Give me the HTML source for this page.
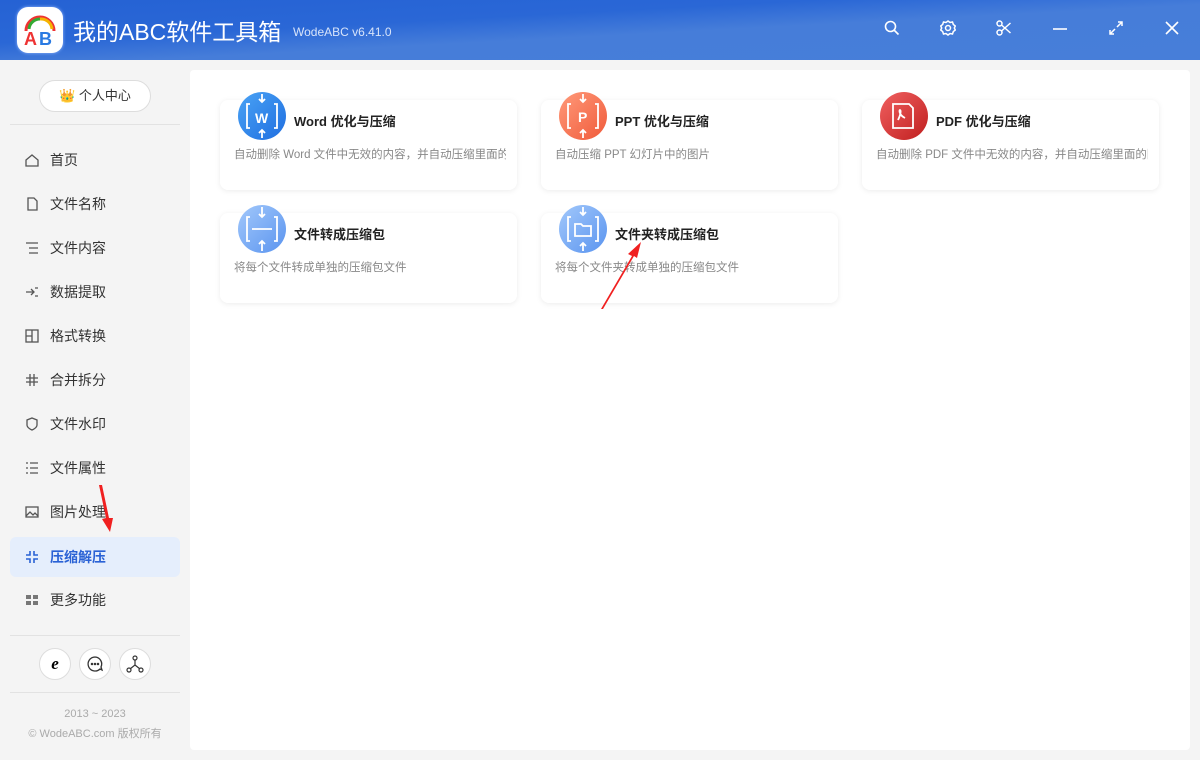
<!DOCTYPE html><html><head><meta charset="utf-8"><style>
*{margin:0;padding:0;box-sizing:border-box}
body{width:1200px;height:760px;overflow:hidden;font-family:"Liberation Sans","Noto Sans CJK SC",sans-serif;background:#f4f4f4;position:relative}
.hdr{position:absolute;left:0;top:0;width:1200px;height:60px;background:linear-gradient(177deg,#2562d4 0%,#2a67d6 35%,#467dd9 55%,#477ed9 100%)}
.logo{position:absolute;left:17px;top:7px;width:46px;height:46px;border-radius:11px;background:#fff;box-shadow:0 0 3px #9bf}
.title{position:absolute;left:73px;top:13px;color:#fff;font-size:23px}
.ver{position:absolute;left:293px;top:25px;color:#d8e4fa;font-size:12px}
.ic{position:absolute;top:20px}
.side{position:absolute;left:0;top:60px;width:190px;height:700px}
.pc{position:absolute;left:39px;top:80px;width:112px;height:32px;border:1px solid #ddd;border-radius:16px;background:#fff;font-size:13px;color:#333;text-align:center;line-height:30px}
.hr{position:absolute;left:10px;width:170px;height:1px;background:#e2e2e2}
.nav{position:absolute;left:10px;width:170px;height:40px;font-size:14px;color:#333;line-height:40px;padding-left:40px}
.nav svg{position:absolute;left:15px;top:13px}
.nav.act{background:#e5eefc;color:#2a62d5;border-radius:6px;font-weight:bold}
.circ{position:absolute;top:648px;width:32px;height:32px;border-radius:50%;background:#fff;border:1px solid #ddd}
.foot{position:absolute;left:0;width:190px;text-align:center;font-size:11px;color:#aaa}
.main{position:absolute;left:190px;top:70px;width:1000px;height:680px;background:#fff;border-radius:4px}
.card{position:absolute;width:297px;height:90px;background:#fff;border-radius:8px;box-shadow:0 1px 6px rgba(0,0,0,.08)}
.card .i{position:absolute;left:18px;top:-8px;width:48px;height:48px;border-radius:50%}
.card b{position:absolute;left:74px;top:11px;font-size:13px;color:#222}
.card p{position:absolute;left:14px;top:46px;font-size:11.5px;color:#888;white-space:nowrap;overflow:hidden;width:272px}
</style></head><body>
<div class="hdr"></div>
<div class="logo"><svg width="46" height="46"><path d="M9 24 A14 14 0 0 1 37 24" stroke="#e33" stroke-width="3" fill="none"/><path d="M12 22 A11 11 0 0 1 23 12" stroke="#3a3" stroke-width="3" fill="none"/><path d="M23 12 A11 11 0 0 1 35 22" stroke="#f5b400" stroke-width="3" fill="none"/><text x="7" y="38" font-size="18" font-weight="bold" fill="#e33" font-family="Liberation Sans">A</text><text x="22" y="38" font-size="18" font-weight="bold" fill="#2a7ae2" font-family="Liberation Sans">B</text></svg></div>
<div class="title">我的ABC软件工具箱</div><div class="ver">WodeABC v6.41.0</div>
<svg class="ic" style="left:884px" width="16" height="16" fill="none" stroke="#fff" stroke-width="1.6"><circle cx="6.5" cy="6.5" r="5"/><path d="M10 10l4.5 4.5"/></svg>
<svg class="ic" style="left:940px" width="16" height="16" fill="none" stroke="#fff" stroke-width="1.5"><circle cx="8" cy="8" r="2.5"/><path d="M8 1l2 1.5 2.5-.5.8 2.4 2 1.6-1 2 1 2-2 1.6-.8 2.4-2.5-.5L8 15l-2-1.5-2.5.5-.8-2.4-2-1.6 1-2-1-2 2-1.6.8-2.4 2.5.5z"/></svg>
<svg class="ic" style="left:996px" width="16" height="16" fill="none" stroke="#fff" stroke-width="1.5"><circle cx="3.5" cy="3.5" r="2.5"/><circle cx="3.5" cy="12.5" r="2.5"/><path d="M5.5 5l9 8M5.5 11l9-8"/></svg>
<svg class="ic" style="left:1052px" width="16" height="16" stroke="#fff" stroke-width="1.6"><path d="M1 9h14"/></svg>
<svg class="ic" style="left:1108px" width="16" height="16" fill="none" stroke="#fff" stroke-width="1.5"><path d="M9 7l5-5M10 2h4v4M7 9l-5 5M2 10v4h4"/></svg>
<svg class="ic" style="left:1164px" width="16" height="16" stroke="#fff" stroke-width="1.6"><path d="M2 2l12 12M14 2L2 14"/></svg>
<div class="side">
<div class="pc" style="top:20px">👑 个人中心</div>
<div class="hr" style="top:64px"></div>
<div class="hr" style="top:575px"></div>
<div class="hr" style="top:632px"></div>
</div>
<div class="nav" style="top:140px"><svg width="14" height="14" fill="none" stroke="#555" stroke-width="1.3"><path d="M1 7l6-5 6 5v6H1z"/></svg>首页</div>
<div class="nav" style="top:184px"><svg width="14" height="14" fill="none" stroke="#555" stroke-width="1.3"><path d="M3 1h6l3 3v9H3z"/></svg>文件名称</div>
<div class="nav" style="top:228px"><svg width="14" height="14" stroke="#555" stroke-width="1.3"><path d="M1 2h12M4 7h9M4 12h9"/></svg>文件内容</div>
<div class="nav" style="top:272px"><svg width="14" height="14" stroke="#555" stroke-width="1.3" fill="none"><path d="M1 7h7M6 4l3 3-3 3M10 3h3M10 11h3"/></svg>数据提取</div>
<div class="nav" style="top:316px"><svg width="14" height="14" stroke="#555" stroke-width="1.3" fill="none"><rect x="1" y="1" width="12" height="12"/><path d="M7 1v12M1 7h6"/></svg>格式转换</div>
<div class="nav" style="top:360px"><svg width="14" height="14" stroke="#555" stroke-width="1.3"><path d="M5 1v12M9 1v12M1 5h12M1 9h12"/></svg>合并拆分</div>
<div class="nav" style="top:404px"><svg width="14" height="14" stroke="#555" stroke-width="1.3" fill="none"><path d="M7 1l5 2v5c0 3-5 5-5 5S2 11 2 8V3z"/></svg>文件水印</div>
<div class="nav" style="top:448px"><svg width="14" height="14" stroke="#555" stroke-width="1.3"><path d="M1 2h2M5 2h8M1 7h2M5 7h8M1 12h2M5 12h8"/></svg>文件属性</div>
<div class="nav" style="top:492px"><svg width="14" height="14" stroke="#555" stroke-width="1.3" fill="none"><rect x="1" y="2" width="12" height="10"/><path d="M1 11l4-4 3 3 2-2 3 3"/></svg>图片处理</div>
<div class="nav act" style="top:537px"><svg width="14" height="14" stroke="#2a62d5" stroke-width="1.6" fill="none"><path d="M5 1v4H1M9 1v4h4M5 13V9H1M9 13V9h4"/></svg>压缩解压</div>
<div class="nav" style="top:580px"><svg width="14" height="14" fill="#777"><rect x="1" y="2" width="5" height="4"/><rect x="8" y="2" width="5" height="4"/><rect x="1" y="8" width="5" height="4"/><rect x="8" y="8" width="5" height="4"/></svg>更多功能</div>
<div class="circ" style="left:39px;font:bold italic 17px 'Liberation Serif';text-align:center;line-height:30px">e</div>
<div class="circ" style="left:79px"><svg width="30" height="30" fill="none" stroke="#333" stroke-width="1.3"><path d="M15 8a7 7 0 1 0 5 12l2 1-1-3a7 7 0 0 0-6-10z"/><circle cx="12" cy="15" r=".6" fill="#333"/><circle cx="15" cy="15" r=".6" fill="#333"/><circle cx="18" cy="15" r=".6" fill="#333"/></svg></div>
<div class="circ" style="left:119px"><svg width="30" height="30" fill="none" stroke="#333" stroke-width="1.2"><circle cx="15" cy="9" r="2"/><circle cx="9" cy="21" r="2"/><circle cx="21" cy="21" r="2"/><path d="M15 11v5l-5 4M15 16l5 4"/></svg></div>
<div class="foot" style="top:708px">2013 ~ 2023</div>
<div class="foot" style="top:725px">© WodeABC.com 版权所有</div>
<div class="main"></div>
<div class="card" style="left:220px;top:100px"><div class="i" style="background:linear-gradient(135deg,#4aa3f5,#1f6ee0)"></div><b>Word 优化与压缩</b><p>自动删除 Word 文件中无效的内容，并自动压缩里面的图片</p></div>
<div class="card" style="left:541px;top:100px"><div class="i" style="background:linear-gradient(135deg,#ff9a7a,#f05a3a)"></div><b>PPT 优化与压缩</b><p>自动压缩 PPT 幻灯片中的图片</p></div>
<div class="card" style="left:862px;top:100px"><div class="i" style="background:linear-gradient(135deg,#f06060,#c01f1f)"></div><b>PDF 优化与压缩</b><p>自动删除 PDF 文件中无效的内容，并自动压缩里面的图片</p></div>
<div class="card" style="left:220px;top:213px"><div class="i" style="background:linear-gradient(135deg,#a2c8fb,#5a94ef)"></div><b>文件转成压缩包</b><p>将每个文件转成单独的压缩包文件</p></div>
<div class="card" style="left:541px;top:213px"><div class="i" style="background:linear-gradient(135deg,#a2c8fb,#5a94ef)"></div><b>文件夹转成压缩包</b><p>将每个文件夹转成单独的压缩包文件</p></div>
<svg style="position:absolute;left:0;top:0" width="1200" height="760">
<g fill="none" stroke="#fff" stroke-width="1.8">
<path d="M250 104h-3v24h3M274 104h3v24h-3M262 94v8M259 99l3 3 3-3M262 138v-8M259 133l3-3 3 3"/>
<path d="M571 104h-3v24h3M595 104h3v24h-3M583 94v8M580 99l3 3 3-3M583 138v-8M580 133l3-3 3 3"/>
<path d="M250 217h-3v24h3M274 217h3v24h-3M262 207v10M259 214l3 3 3-3M262 251v-10M259 244l3-3 3 3M252 229h20"/>
<path d="M571 217h-3v24h3M595 217h3v24h-3M583 207v8M580 212l3 3 3-3M583 251v-8M580 246l3-3 3 3M575 224h6l2 2h8v10h-16z"/>
<path d="M893 104h16l4 4v20h-20zM898 120c3-6 3-10 2-10s-1 5 5 8"/>
</g>
<text x="255" y="123" font-size="14" font-weight="bold" fill="#fff" font-family="Liberation Sans">W</text>
<text x="578" y="122" font-size="14" font-weight="bold" fill="#fff" font-family="Liberation Sans">P</text>
<path d="M99 485l7 33-4 1 8 13 3-14-4 0-7-33z" fill="#f02020"/>
<path d="M601 309l31-53-4-2 13-12-4 16-3-2-31 53z" fill="#f02020"/>
</svg>
</body></html>
